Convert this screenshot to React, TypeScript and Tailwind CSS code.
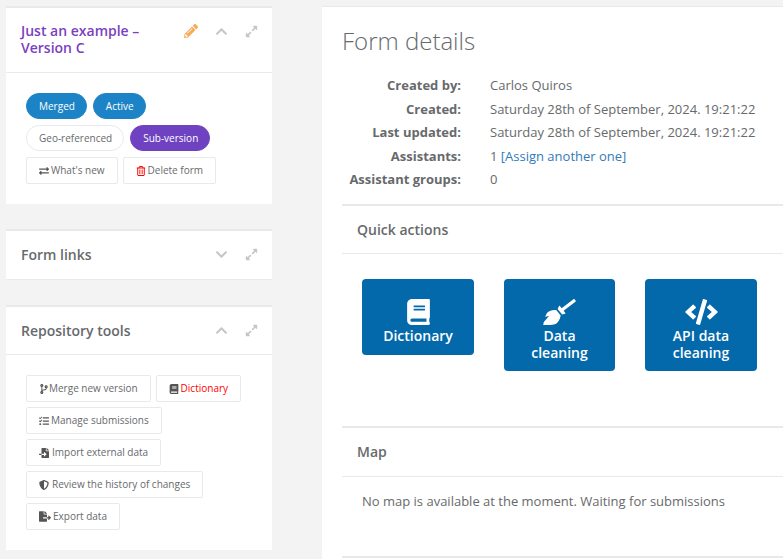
import type { ReactNode } from "react";
import { FaBook, FaBroom, FaChevronDown, FaChevronUp, FaCode, FaCodeBranch, FaExchangeAlt, FaExpandAlt, FaFileExport, FaFileImport, FaPencilAlt, FaShieldAlt, FaTasks } from "react-icons/fa";
import { FaRegTrashCan } from "react-icons/fa6";

function Panel({ title, titleClass, open = true, pencil, headerClass, children }: { title: string; titleClass?: string; open?: boolean; pencil?: boolean; headerClass: string; children?: ReactNode }) {
  return (
    <section className="bg-white border-t-2 border-[#e7eaec]">
      <div className={`relative px-[15px] border-b border-[#e7eaec] ${headerClass}`}>
        <h5 className={`text-[14px] leading-[17px] font-semibold w-[150px] ${titleClass ?? "text-[#676a6c]"}`}>{title}</h5>
        {pencil && <FaPencilAlt className="absolute left-[178px] top-[16px] text-[14px] text-[#f8ac59]" />}
        {open ? (
          <FaChevronUp className="absolute left-[209px] top-[17px] text-[13px] text-[#c4c6c8]" />
        ) : (
          <FaChevronDown className="absolute left-[209px] top-[17px] text-[13px] text-[#c4c6c8]" />
        )}
        <FaExpandAlt className="absolute left-[239px] top-[17px] text-[13px] text-[#c4c6c8]" />
      </div>
      {children}
    </section>
  );
}

function Pill({ label, className }: { label: string; className: string }) {
  return <span className={`h-[26px] pl-[12px] pr-[11px] rounded-full border text-[10px] leading-[24px] ${className}`}>{label}</span>;
}

function Btn({ icon, label, labelClass }: { icon: ReactNode; label: string; labelClass?: string }) {
  return (
    <span className={`h-[27px] px-[12px] flex items-center gap-[2px] border border-[#e7eaec] rounded-[2px] bg-white text-[10px] ${labelClass ?? "text-[#676a6c]"}`}>
      {icon}
      {label}
    </span>
  );
}

function Detail({ label, children, rowClass }: { label: string; children: ReactNode; rowClass: string }) {
  return (
    <div className={`flex ${rowClass}`}>
      <span className="w-[133px] text-right font-bold text-[#676a6c]">{label}</span>
      <span className="ml-[29px] text-[#676a6c]">{children}</span>
    </div>
  );
}

function Action({ icon, children, className }: { icon: ReactNode; children: ReactNode; className: string }) {
  return (
    <div className={`rounded-[4px] bg-[#0369ab] text-white text-center font-semibold text-[14px] leading-[17px] flex flex-col items-center ${className}`}>
      {icon}
      {children}
    </div>
  );
}

export default function App() {
  return (
    <div className="h-[559px] w-[783px] overflow-hidden bg-[#f3f3f4] flex font-['Open_Sans',sans-serif] text-[13px]">
      <aside className="w-[266px] ml-[6px] mt-[6px] shrink-0">
        <Panel title="Just an example – Version C" titleClass="text-[#7b3fbf]" pencil headerClass="h-[65px] pt-[14px]">
          <div className="h-[131px] pl-[20px] pt-[20px] flex flex-col gap-[6px]">
            <div className="flex gap-[6px]">
              <Pill label="Merged" className="bg-[#1c84c6] border-[#1c84c6] text-white" />
              <Pill label="Active" className="bg-[#1c84c6] border-[#1c84c6] text-white" />
            </div>
            <div className="flex gap-[6px]">
              <Pill label="Geo-referenced" className="bg-white border-[#e7eaec] text-[#676a6c]" />
              <Pill label="Sub-version" className="bg-[#6f42c1] border-[#6f42c1] text-white" />
            </div>
            <div className="flex gap-[5px]">
              <Btn icon={<FaExchangeAlt className="text-[10px] text-[#555]" />} label="What's new" />
              <Btn icon={<FaRegTrashCan className="text-[10px] text-[#f00]" />} label="Delete form" />
            </div>
          </div>
        </Panel>
        <div className="mt-[25px]">
          <Panel title="Form links" open={false} headerClass="h-[49px] pt-[15px]" />
        </div>
        <div className="mt-[25px]">
          <Panel title="Repository tools" headerClass="h-[48px] pt-[15px]">
            <div className="h-[195px] pl-[20px] pt-[20px] flex flex-col items-start gap-[5px]">
              <div className="flex gap-[5px]">
                <Btn icon={<FaCodeBranch className="text-[10px] text-[#555] -mr-[2px]" />} label="Merge new version" />
                <Btn icon={<FaBook className="text-[10px] text-[#555]" />} label="Dictionary" labelClass="text-[#f00]" />
              </div>
              <Btn icon={<FaTasks className="text-[10px] text-[#555]" />} label="Manage submissions" />
              <Btn icon={<FaFileImport className="text-[10px] text-[#555] mr-[1px]" />} label="Import external data" />
              <Btn icon={<FaShieldAlt className="text-[10px] text-[#555] mr-[1px]" />} label="Review the history of changes" />
              <Btn icon={<FaFileExport className="w-[12px] h-[11px] text-[#555]" />} label="Export data" />
            </div>
          </Panel>
        </div>
      </aside>

      <main className="ml-[50px] mt-[6px] flex-1 bg-white border-t border-[#e7eaec] pl-[20px]">
        <h2 className="mt-[17px] text-[24px] leading-[33px] font-light text-[#676a6c]">Form details</h2>
        <div className="mt-[18px] -ml-[14px] h-[117px] flex flex-col">
          <Detail label="Created by:" rowClass="h-[25px] pt-[1px]">Carlos Quiros</Detail>
          <Detail label="Created:" rowClass="h-[23px]">Saturday 28th of September, 2024. 19:21:22</Detail>
          <Detail label="Last updated:" rowClass="h-[24px]">Saturday 28th of September, 2024. 19:21:22</Detail>
          <Detail label="Assistants:" rowClass="h-[23px]">1 <span className="text-[#337ab7]">[Assign another one]</span></Detail>
          <Detail label="Assistant groups:" rowClass="h-[22px]">0</Detail>
        </div>
        <div className="h-[50px] mt-[12px] border-t-2 border-b border-[#e7eaec] pl-[15px] pt-[15px] text-[14px] leading-[17px] font-semibold text-[#676a6c]">Quick actions</div>
        <div className="h-[172px] pl-[20px] pt-[25px] flex items-start gap-[30px]">
          <Action icon={<FaBook className="w-[23px] h-[26px] mt-[20px] mb-[2px]" />} className="w-[112px] h-[76px]">Dictionary</Action>
          <Action icon={<FaBroom className="w-[33px] h-[26px] mt-[20px] mb-[2px]" />} className="w-[111px] h-[92px]">Data<br />cleaning</Action>
          <Action icon={<FaCode className="w-[33px] h-[26px] mt-[20px] mb-[2px]" />} className="w-[112px] h-[92px]">API data<br />cleaning</Action>
        </div>
        <div className="h-[51px] border-t-2 border-b border-[#e7eaec] pl-[15px] pt-[15px] text-[14px] leading-[17px] font-semibold text-[#676a6c]">Map</div>
        <div className="h-[81px] border-b-2 border-[#e7eaec] pl-[20px] pt-[15px] text-[#676a6c]">No map is available at the moment. Waiting for submissions</div>
      </main>
    </div>
  );
}
